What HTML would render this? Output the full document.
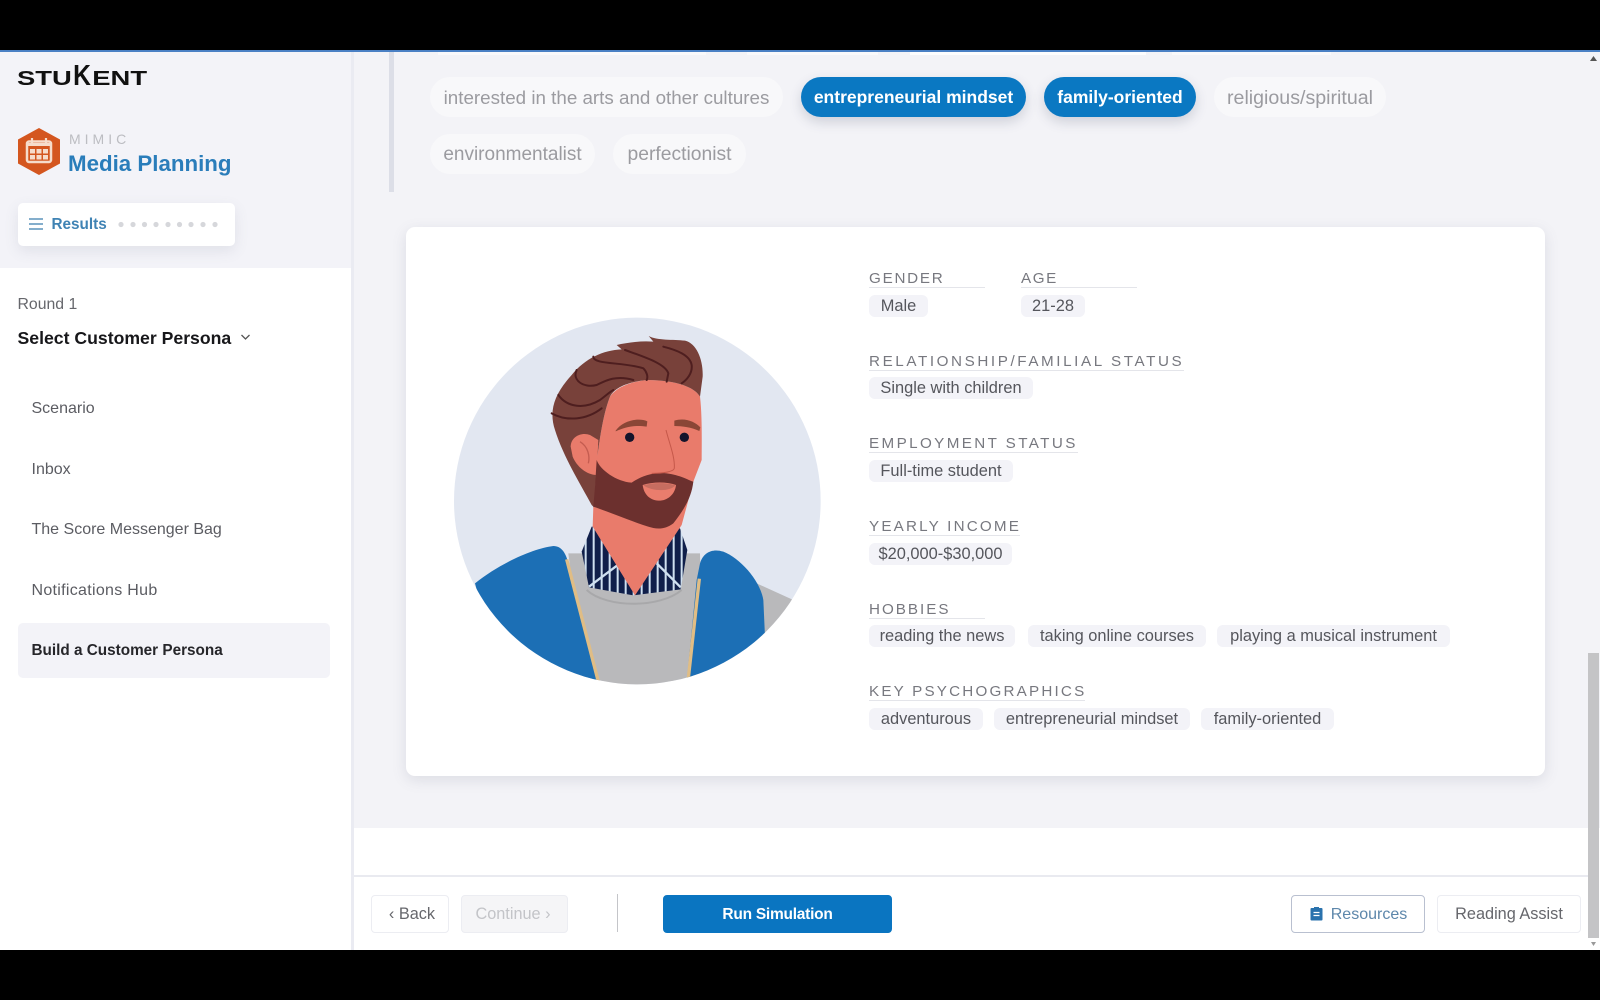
<!DOCTYPE html>
<html><head><meta charset="utf-8"><title>Media Planning</title>
<style>
*{box-sizing:border-box;margin:0;padding:0}
html,body{width:1600px;height:1000px;overflow:hidden;background:#000;font-family:"Liberation Sans",sans-serif}
.a{position:absolute;white-space:nowrap}
#app{position:absolute;left:0;top:51px;width:1600px;height:899px;background:#fff;overflow:hidden}
.p{position:absolute;height:40px;border-radius:20px;background:#f8f8fa;color:#9b9ba0;font-size:19px;line-height:42px;text-align:center;white-space:nowrap}
.p.on{background:#0a78c2;color:#fff;font-weight:bold;font-size:17.5px;line-height:40px;box-shadow:0 5px 12px rgba(60,70,100,.2)}
.l{position:absolute;left:869px;height:20px;line-height:21px;font-size:15.2px;letter-spacing:2.6px;color:#77787f;border-bottom:1px solid #e4e5ea;white-space:nowrap}
.t{position:absolute;height:22px;line-height:22px;border-radius:6px;background:#f3f3f8;color:#55565c;font-size:16.4px;text-align:center;white-space:nowrap}
.n{position:absolute;left:31.5px;font-size:16px;line-height:20px;color:#5b5c62;white-space:nowrap}
.b{position:absolute;top:895px;height:38px;line-height:37px;border:1px solid #ecedf2;border-radius:4px;background:#fff;color:#66676c;font-size:16.3px;text-align:center;white-space:nowrap}
</style></head><body>
<div id="app"></div>

<!-- main background -->
<div class="a" style="left:353px;top:51px;width:1247px;height:777px;background:#f3f3f7"></div>
<div class="a" style="left:353px;top:828px;width:1235px;height:47px;background:#fff"></div>
<div class="a" style="left:353px;top:875px;width:1235px;height:2px;background:#e9eaf0"></div>

<!-- cut-off pills at top edge -->
<div class="a" style="left:438px;top:52px;width:268px;height:3px;background:#f9f9fb"></div>
<div class="a" style="left:747px;top:52px;width:131px;height:3px;background:#f9f9fb"></div>
<div class="a" style="left:910px;top:52px;width:236px;height:3px;background:#fdfdfe"></div>
<div class="a" style="left:1172px;top:52px;width:159px;height:3px;background:#f9f9fb"></div>

<!-- sidebar -->
<div class="a" style="left:0;top:51px;width:351px;height:217px;background:#f3f3f8"></div>
<div class="a" style="left:351px;top:51px;width:3px;height:899px;background:#eaebf2"></div>

<!-- logo -->
<div class="a" style="left:17px;top:64px;font-size:20px;line-height:30px;font-weight:bold;color:#111;transform-origin:0 50%;transform:scaleX(1.37)">STU<span style="display:inline-block;font-size:29px;line-height:0;font-weight:bold;transform:scaleX(.62);margin:0 -3px">K</span>ENT</div>

<!-- hex icon -->
<svg class="a" style="left:18px;top:128px" width="42" height="47" viewBox="0 0 42 47">
<path d="M21 0L42 11.500V35.500L21 47L0 35.500V11.500Z" fill="#d4561f"/>
<rect x="9" y="13.500" width="24" height="20.500" rx="2" fill="none" stroke="#f6dccb" stroke-width="2.500"/>
<path d="M9 16.500H33" stroke="#f6dccb" stroke-width="3"/>
<path d="M14 10V15M28 10V15" stroke="#f6dccb" stroke-width="2.200"/>
<g fill="#f6dccb"><rect x="12" y="21" width="5" height="4.500"/><rect x="18.500" y="21" width="5" height="4.500"/><rect x="25" y="21" width="5" height="4.500"/><rect x="12" y="27" width="5" height="4.500"/><rect x="18.500" y="27" width="5" height="4.500"/><rect x="25" y="27" width="5" height="4.500"/></g>
</svg>
<div class="a" style="left:69px;top:131px;font-size:14px;line-height:16px;color:#bcbdc2;letter-spacing:4px">MIMIC</div>
<div class="a" style="left:68px;top:150px;font-size:22.3px;line-height:28px;font-weight:bold;color:#2a7dba">Media Planning</div>

<!-- results -->
<div class="a" style="left:18px;top:203px;width:217px;height:43px;background:#fff;border-radius:5px;box-shadow:0 5px 14px rgba(90,95,120,.12)"></div>
<svg class="a" style="left:29px;top:217px" width="15" height="14"><path d="M0 2H14M0 7H14M0 12H14" stroke="#5c93bb" stroke-width="1.600"/></svg>
<div class="a" style="left:51.500px;top:215px;font-size:15.300px;line-height:20px;font-weight:bold;color:#3f83b4">Results</div>
<svg class="a" style="left:116px;top:220px" width="106" height="10"><g fill="#d6d7db"><circle cx="5" cy="4.500" r="2.600"/><circle cx="17" cy="4.500" r="2.600"/><circle cx="28.500" cy="4.500" r="2.600"/><circle cx="40" cy="4.500" r="2.600"/><circle cx="52" cy="4.500" r="2.600"/><circle cx="63.500" cy="4.500" r="2.600"/><circle cx="75" cy="4.500" r="2.600"/><circle cx="87" cy="4.500" r="2.600"/><circle cx="99" cy="4.500" r="2.600"/></g></svg>

<!-- nav -->
<div class="a" style="left:17.500px;top:295px;font-size:15.800px;line-height:20px;color:#66676c">Round 1</div>
<div class="a" style="left:17.500px;top:327px;font-size:17.650px;line-height:22px;font-weight:bold;color:#17171a">Select Customer Persona</div>
<svg class="a" style="left:240px;top:333px" width="11" height="9"><path d="M1.500 2L5.500 6L9.500 2" fill="none" stroke="#555" stroke-width="1.300"/></svg>
<div class="n" style="top:399px">Scenario</div>
<div class="n" style="top:460px">Inbox</div>
<div class="n" style="top:520px">The Score Messenger Bag</div>
<div class="n" style="top:581px;letter-spacing:.3px">Notifications Hub</div>
<div class="a" style="left:18px;top:623px;width:312px;height:55px;background:#f3f3f8;border-radius:5px"></div>
<div class="n" style="top:641px;font-weight:bold;color:#26262a;font-size:15.300px">Build a Customer Persona</div>

<!-- top scroll marker -->
<div class="a" style="left:389px;top:51px;width:5px;height:141px;background:#dcdee7"></div>

<!-- pills -->
<div class="p" style="left:430px;top:77px;width:353px;font-size:18.800px">interested in the arts and other cultures</div>
<div class="p on" style="left:801px;top:77px;width:225px">entrepreneurial mindset</div>
<div class="p on" style="left:1044px;top:77px;width:152px">family-oriented</div>
<div class="p" style="left:1214px;top:77px;width:172px;font-size:19.600px">religious/spiritual</div>
<div class="p" style="left:430px;top:134px;width:165px">environmentalist</div>
<div class="p" style="left:613px;top:134px;width:133px;font-size:19.300px">perfectionist</div>

<!-- card -->
<div class="a" style="left:406px;top:227px;width:1139px;height:549px;background:#fff;border-radius:9px;box-shadow:0 4px 14px rgba(100,105,130,.16)"></div>

<!-- avatar -->
<svg class="a" style="left:440px;top:300px" width="400" height="400" viewBox="0 0 1200 1200">
<defs>
<clipPath id="c"><circle cx="592" cy="603" r="550"/></clipPath>
<pattern id="s" width="24" height="26" patternUnits="userSpaceOnUse"><rect width="24" height="26" fill="#101f4a"/><rect x="2" width="6" height="26" fill="#cfe0f0"/></pattern>
</defs>
<g clip-path="url(#c)">
<rect width="1200" height="1200" fill="#e2e7f1"/>
<path d="M950 850L1060 900L1060 1100L940 1100Z" fill="#b9b9bb"/>
<path d="M385 760L780 760L790 1200L440 1200Z" fill="#b9b9bb"/>
<path d="M440 870C500 925 660 925 725 870" fill="none" stroke="#a8a8aa" stroke-width="6"/>
<path d="M455 680L425 755L447 862L580 886L722 868L742 750L720 685Z" fill="url(#s)"/>
<path d="M447 860L540 790M722 862L650 790" stroke="#cfe0f0" stroke-width="7"/>
<path d="M105 850C180 790 280 745 340 738C365 738 378 760 385 790L490 1200L200 1200Z" fill="#1c6fb5"/>
<path d="M780 790C790 755 820 745 850 755C900 775 960 840 970 900L975 1010L900 1200L735 1200L770 840Z" fill="#1c6fb5"/>
<path d="M380 778L475 1145" stroke="#e0bd85" stroke-width="10"/>
<path d="M778 836L745 1135" stroke="#e0bd85" stroke-width="10"/>
<!-- skin: face + neck -->
<path d="M510 290C530 260 575 245 620 240C690 240 760 255 780 290C787 350 785 430 785 480L760 545L725 675L585 886L458 680L460 620L470 490C478 420 490 340 510 290Z" fill="#e97b6b"/>
<!-- hair -->
<path d="M530 135C560 128 600 122 640 125L626 108C650 122 700 118 735 122C770 130 790 180 788 230L780 290C760 255 690 240 620 240C570 245 525 260 510 290C490 340 478 420 470 490L462 622L455 615C420 550 370 470 345 390C325 330 345 280 395 225C435 175 490 150 545 148Z" fill="#78413a"/>
<!-- ear -->
<path d="M392 440C392 410 425 395 450 405L475 420L470 525C440 525 410 500 398 470Z" fill="#e97b6b"/>
<path d="M420 425C445 440 450 470 445 490" fill="none" stroke="#c45c50" stroke-width="4"/>
<!-- beard -->
<path d="M470 480C480 510 530 545 575 548C600 530 640 515 680 520C720 525 745 540 760 545C755 590 735 625 700 670C680 685 660 688 640 684C600 675 520 640 460 620L465 560Z" fill="#6c302e"/>
<path d="M608 555C640 545 680 545 708 555C705 585 680 603 655 602C630 600 612 585 608 555Z" fill="#ea7d6d"/>
<path d="M610 556C640 547 680 547 706 556C692 574 640 576 610 556Z" fill="#c76d60"/>
<!-- brows, eyes, nose -->
<path d="M527 392C548 362 595 352 622 364L620 380C580 374 555 382 527 394Z" fill="#8a4636"/>
<path d="M703 362C735 352 765 365 781 382L778 393C755 382 725 378 703 378Z" fill="#8a4636"/>
<circle cx="569" cy="412" r="14" fill="#14142b"/>
<circle cx="733" cy="412" r="14" fill="#14142b"/>
<path d="M678 390C688 430 705 470 703 505C700 515 670 520 635 520" fill="none" stroke="#c5584a" stroke-width="3"/>
<!-- hair lines -->
<g fill="none" stroke="#4e1e1f" stroke-width="6" stroke-linecap="round">
<path d="M670 140C710 150 750 165 755 195C758 220 740 240 725 250"/>
<path d="M555 150C610 170 675 190 685 220L680 245"/>
<path d="M460 170C460 195 550 185 610 205C620 215 625 230 620 240"/>
<path d="M410 210C395 240 430 265 470 255C500 240 530 225 580 240"/>
<path d="M355 285C380 320 430 330 480 300C500 285 510 275 520 270"/>
<path d="M335 340C380 365 440 360 485 325"/>
</g>
</g>
</svg>

<!-- details -->
<div class="l" style="top:268px;width:116px;letter-spacing:1.75px">GENDER</div>
<div class="l" style="top:268px;left:1021px;width:116px;letter-spacing:1.6px">AGE</div>
<div class="t" style="left:869px;top:295px;width:59px">Male</div>
<div class="t" style="left:1021px;top:295px;width:64px">21-28</div>

<div class="l" style="top:351px;width:315px">RELATIONSHIP/FAMILIAL STATUS</div>
<div class="t" style="left:869px;top:377px;width:164px">Single with children</div>

<div class="l" style="top:433px;width:209px;letter-spacing:2.4px">EMPLOYMENT STATUS</div>
<div class="t" style="left:869px;top:460px;width:144px">Full-time student</div>

<div class="l" style="top:516px;width:151px;letter-spacing:2.2px">YEARLY INCOME</div>
<div class="t" style="left:869px;top:543px;width:143px">$20,000-$30,000</div>

<div class="l" style="top:599px;width:116px;letter-spacing:2px">HOBBIES</div>
<div class="t" style="left:869px;top:625px;width:146px">reading the news</div>
<div class="t" style="left:1028px;top:625px;width:178px">taking online courses</div>
<div class="t" style="left:1217px;top:625px;width:233px">playing a musical instrument</div>

<div class="l" style="top:681px;width:216px;letter-spacing:2.2px">KEY PSYCHOGRAPHICS</div>
<div class="t" style="left:869px;top:708px;width:114px">adventurous</div>
<div class="t" style="left:994px;top:708px;width:196px">entrepreneurial mindset</div>
<div class="t" style="left:1201px;top:708px;width:133px">family-oriented</div>

<!-- footer -->
<div class="b" style="left:371px;width:78px;padding-left:4px">&#8249; Back</div>
<div class="b" style="left:461px;width:107px;background:#f5f5f7;color:#c3c4c8;padding-right:3px">Continue &#8250;</div>
<div class="a" style="left:617px;top:894px;width:1px;height:38px;background:#c4c5c9"></div>
<div class="b" style="left:663px;width:229px;background:#0a75c1;border-color:#0a75c1;color:#fff;font-weight:bold;font-size:15.500px;letter-spacing:-.25px">Run Simulation</div>
<div class="b" style="left:1291px;width:134px;border:1.500px solid #b9c0d0;color:#5d87ab;padding-left:22px;font-size:16px">Resources</div>
<svg class="a" style="left:1310px;top:906px" width="13" height="15" viewBox="0 0 13 15"><path d="M1.500 2H4V1H9V2H11.500A1 1 0 0 1 12.500 3V13.500A1 1 0 0 1 11.500 14.500H1.500A1 1 0 0 1 .5 13.500V3A1 1 0 0 1 1.500 2Z" fill="#2a72ad"/><path d="M3.500 6.500H9.500M3.500 9.500H9.500" stroke="#fff" stroke-width="1.200"/></svg>
<div class="b" style="left:1437px;width:144px">Reading Assist</div>

<!-- scrollbar -->
<div class="a" style="left:1588px;top:828px;width:12px;height:122px;background:#fff"></div>
<div class="a" style="left:1588px;top:653px;width:11px;height:285px;background:#c4c4c6"></div>
<svg class="a" style="left:1589px;top:55px" width="9" height="7"><path d="M1 6L4.500 1L8 6Z" fill="#555"/></svg>
<svg class="a" style="left:1589px;top:941px" width="9" height="7"><path d="M2 1H7L4.500 5Z" fill="#999"/></svg>
<div class="a" style="left:0;top:50px;width:1600px;height:2px;background:#4a80c4"></div>
</body></html>
